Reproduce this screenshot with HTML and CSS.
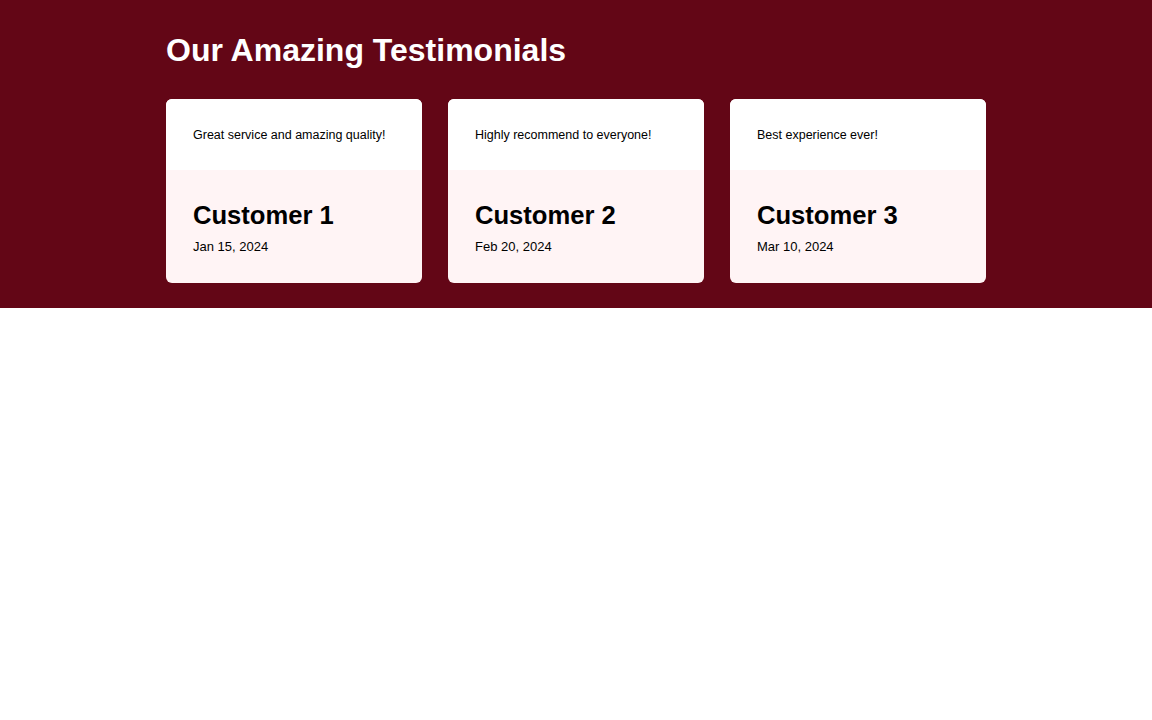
FILE: index.html
```html
<!DOCTYPE html>
<html>
<head>
<meta charset="utf-8">
<link rel="stylesheet" href="styles.css">
</head>
<body>
<section class="testimonials">
  <div class="container">
    <h2 class="title">Our Amazing Testimonials</h2>
    <div class="grid">
      <div class="card">
        <div class="quote"><p>Great service and amazing quality!</p></div>
        <div class="author">
          <h3>Customer 1</h3>
          <p>Jan 15, 2024</p>
        </div>
      </div>
      <div class="card">
        <div class="quote"><p>Highly recommend to everyone!</p></div>
        <div class="author">
          <h3>Customer 2</h3>
          <p>Feb 20, 2024</p>
        </div>
      </div>
      <div class="card">
        <div class="quote"><p>Best experience ever!</p></div>
        <div class="author">
          <h3>Customer 3</h3>
          <p>Mar 10, 2024</p>
        </div>
      </div>
    </div>
  </div>
</section>
</body>
</html>
```

FILE: styles.css
```css
* { box-sizing: border-box; }
body {
  margin: 0;
  font-family: "Liberation Sans", Arial, sans-serif;
  background: #ffffff;
  color: #000;
}
.testimonials {
  background: #630616;
  padding: 26px 0 25px;
}
.container {
  width: 820px;
  margin: 0 auto;
}
.title {
  margin: 0 0 25px;
  color: #ffffff;
  font-size: 32px;
  font-weight: 700;
  line-height: 48px;
}
.grid {
  display: grid;
  grid-template-columns: repeat(3, 1fr);
  gap: 26px;
}
.card {
  border-radius: 6px;
  overflow: hidden;
  background: #fff4f5;
}
.quote {
  background: #ffffff;
  padding: 27px 27px 25px;
}
.quote p {
  margin: 0;
  font-size: 12.5px;
  line-height: 19px;
}
.author {
  padding: 26px 27px 28px;
}
.author h3 {
  margin: 0 0 4px;
  font-size: 25.6px;
  line-height: 38px;
  font-weight: 700;
}
.author p {
  margin: 0;
  font-size: 13px;
  line-height: 17px;
}
```
